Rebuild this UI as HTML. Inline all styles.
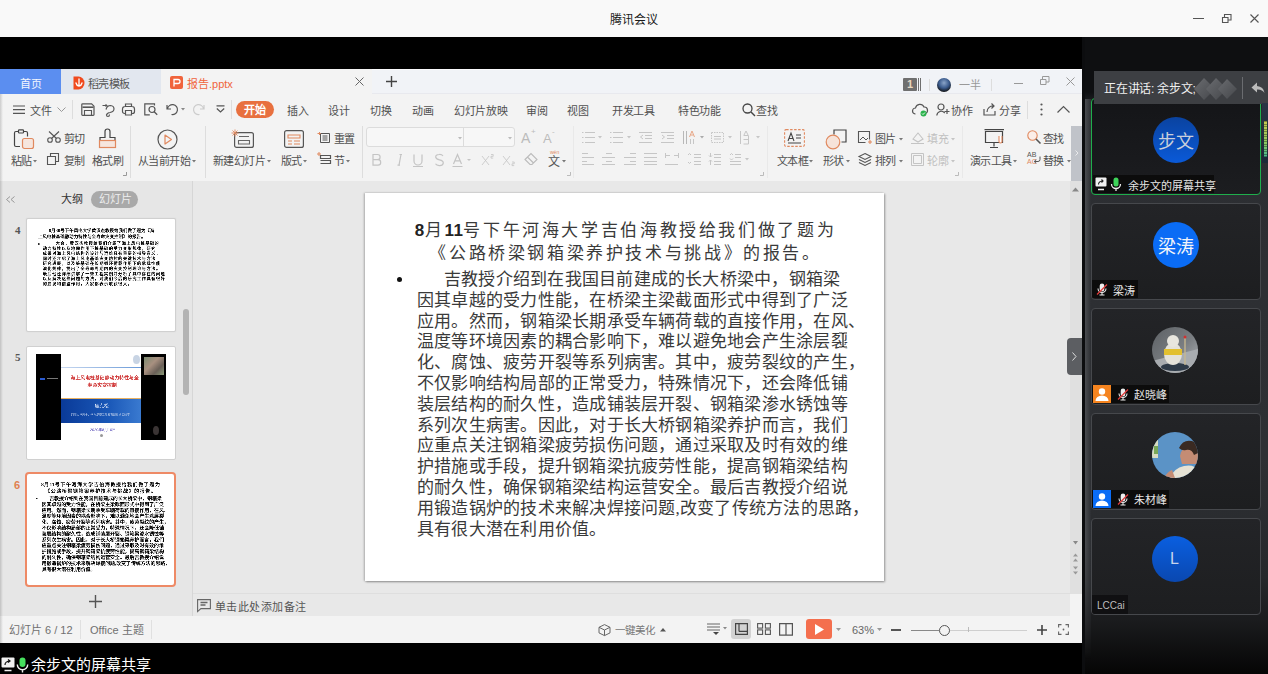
<!DOCTYPE html>
<html lang="zh-CN"><head><meta charset="utf-8">
<style>
*{margin:0;padding:0;box-sizing:border-box}
html,body{width:1268px;height:674px;overflow:hidden;background:#000;font-family:"Liberation Sans",sans-serif}
.a{position:absolute}
.t{position:absolute;white-space:nowrap;line-height:1}
svg{position:absolute;overflow:visible}
#title{left:0;top:0;width:1268px;height:37px;background:#f9f9f9}
#wps{left:0;top:69px;width:1082px;height:574px;background:#f3f3f3;overflow:hidden}
#tabs{left:0;top:0;width:1082px;height:25px;background:#f1f3f7}
#rp{left:1082px;top:37px;width:186px;height:637px;background:#0d0e10}
.m{font-size:11px;color:#505050;margin-top:2px;letter-spacing:-0.3px}
.r{font-size:11px;color:#505050;margin-top:2px;letter-spacing:-0.6px}
.g{color:#b8b8b8}
.st{position:absolute;left:0;width:519px;text-align:center;white-space:nowrap;font-family:"Liberation Serif",serif;font-size:17px;line-height:20px;letter-spacing:2.62px;color:#3a3a3a;text-indent:2px}
.dg{font-family:"Liberation Sans",sans-serif;letter-spacing:0.5px;font-weight:bold;color:#222}
.sl{position:absolute;white-space:nowrap;font-family:"Liberation Serif",serif;font-size:17px;line-height:20px;color:#3a3a3a;letter-spacing:0.23px}
.th{color:#000;font-weight:bold}
</style></head><body>
<!-- Title bar -->
<div id="title" class="a">
  <div class="t" style="left:610px;top:14px;font-size:12px;color:#1a1a1a">腾讯会议</div>
  <div class="a" style="left:1193px;top:18px;width:11px;height:1px;background:#555"></div>
  <svg style="left:1222px;top:14px" width="10" height="9"><path d="M0.5 3.5h5.5v5h-5.5z M2.5 3.5v-3h6.5v5.5h-3" fill="none" stroke="#555" stroke-width="1.1"/></svg>
  <svg style="left:1250px;top:14px" width="9" height="9"><path d="M0.5 0.5L8.5 8.5M8.5 0.5L0.5 8.5" stroke="#555" stroke-width="1.1"/></svg>
</div>

<!-- WPS window -->
<div id="wps" class="a">
  <div id="tabs" class="a">
    <div class="a" style="left:0;top:0;width:61px;height:25px;background:#5b8ef0"></div>
    <div class="t" style="left:20px;top:10px;font-size:11px;color:#f4f7ff;letter-spacing:-0.4px">首页</div>
    <div class="a" style="left:61px;top:0;width:100px;height:25px;background:#e2e7ef"></div>
    <svg style="left:73px;top:7px" width="12" height="14"><path d="M0.5 0.5h5a6 6.5 0 0 1 0 13h-5z" fill="#f04a1e"/><path d="M6 3v7M6 10q-2.5-0.5-3-3M6 10q2.5-0.5 3-3" stroke="#fff" stroke-width="1.3" fill="none" stroke-linecap="round"/></svg>
    <div class="t" style="left:88px;top:10px;font-size:11px;color:#555;letter-spacing:-0.6px">稻壳模板</div>
    <div class="a" style="left:372px;top:0;width:710px;height:1px;background:#fafbfd"></div><div class="a" style="left:372px;top:24px;width:710px;height:1px;background:#e8e9ee"></div><div class="a" style="left:161px;top:0;width:211px;height:25px;background:#f3f3f3"></div>
    <div class="a" style="left:170px;top:7px;width:13px;height:13px;background:#f0643c;border-radius:2px"></div>
    <svg style="left:170px;top:7px" width="13" height="13"><path d="M4 10.5V3.5h4a2 2 0 0 1 0 4H4.5" stroke="#fff" stroke-width="1.3" fill="none"/></svg>
    <div class="t" style="left:187px;top:10px;font-size:11px;color:#f0643c">报告.pptx</div>
    <svg style="left:355px;top:8px" width="9" height="9"><path d="M0.5 0.5L8.5 8.5M8.5 0.5L0.5 8.5" stroke="#666" stroke-width="1"/></svg>
    <svg style="left:386px;top:7px" width="11" height="11"><path d="M5.5 0v11M0 5.5h11" stroke="#444" stroke-width="1.4"/></svg>
    <div class="a" style="left:903px;top:9px;width:14px;height:13px;background:#6f6f6f;border-radius:1px"></div>
    <div class="t" style="left:907px;top:10px;font-size:11px;color:#e8d8c0;font-weight:bold">1</div>
    <div class="a" style="left:918px;top:9px;width:1px;height:13px;background:#6f6f6f"></div>
    <div class="a" style="left:920px;top:9px;width:1px;height:13px;background:#6f6f6f"></div>
    <div class="a" style="left:929px;top:10px;width:1px;height:12px;background:#ddd"></div>
    <div class="a" style="left:937px;top:9px;width:14px;height:14px;border-radius:50%;background:radial-gradient(circle at 50% 35%,#8aa4c8 0,#3a5a8c 45%,#111 80%)"></div>
    <div class="t" style="left:959px;top:11px;font-size:11px;color:#999">一半</div>
    <div class="a" style="left:991px;top:10px;width:1px;height:12px;background:#ddd"></div>
    <div class="a" style="left:1014px;top:14px;width:9px;height:1px;background:#999"></div>
    <svg style="left:1040px;top:7px" width="10" height="9"><path d="M0.5 3.5h5.5v5h-5.5z M2.5 3.5v-3h6.5v5.5h-3" fill="none" stroke="#999" stroke-width="1"/></svg>
    <svg style="left:1066px;top:8px" width="9" height="9"><path d="M0.5 0.5L8.5 8.5M8.5 0.5L0.5 8.5" stroke="#999" stroke-width="1"/></svg>
  </div>
  <!-- menu row -->
  <div id="menu" class="a" style="left:0;top:25px;width:1082px;height:31px">
    <svg style="left:13px;top:11px" width="12" height="10"><path d="M0 1h12M0 4.7h12M0 8.4h12" stroke="#555" stroke-width="1.2"/></svg>
    <div class="t m" style="left:30px;top:10px">文件</div>
    <svg style="left:57px;top:13px" width="9" height="5"><path d="M0.5 0.5l4 4l4-4" stroke="#999" fill="none" stroke-width="1"/></svg>
    <div class="a" style="left:72px;top:6px;width:1px;height:19px;background:#ddd"></div>
    <svg style="left:81px;top:9px" width="14" height="13"><path d="M1.6 0.8h9l2.4 2.4v8.4a0.8 0.8 0 0 1-0.8 0.8h-10.6a0.8 0.8 0 0 1-0.8-0.8v-10a0.8 0.8 0 0 1 0.8-0.8z" stroke="#555" fill="none" stroke-width="1.2"/><path d="M1.5 4.2h11" stroke="#555" stroke-width="1.6"/><path d="M3.5 12v-4.5h7v4.5" stroke="#555" fill="none" stroke-width="1.1"/></svg>
    <svg style="left:102px;top:9px" width="13" height="14"><path d="M0.5 2.5h4.5M3.5 1l1.5 1.5l-1.5 1.5" stroke="#555" fill="none" stroke-width="1"/><path d="M4 6.5q1-4 4.5-4q3.5 0.3 3.5 3.5q-0.3 3-4 3.5q-3 0.3-3.5 2.5q0 1.5 1.5 1.5q1.5 0 1.5-2" stroke="#555" fill="none" stroke-width="1.2"/></svg>
    <svg style="left:122px;top:9px" width="13" height="13"><path d="M3.5 3.5v-2.5h6v2.5 M3 10.5h-0.5a2 2 0 0 1-2-2v-2.5a2.5 2.5 0 0 1 2.5-2.5h7a2.5 2.5 0 0 1 2.5 2.5v2.5a2 2 0 0 1-2 2h-0.5 M3.5 7.5h6v4.5h-6z" stroke="#555" fill="none" stroke-width="1.2"/></svg>
    <svg style="left:144px;top:9px" width="14" height="13"><path d="M10.5 2.5V0.8H0.8v11h5" stroke="#555" fill="none" stroke-width="1.2"/><circle cx="8" cy="6.5" r="3" stroke="#555" fill="none" stroke-width="1.2"/><path d="M10.2 8.7l3 3" stroke="#555" stroke-width="1.3"/></svg>
    <svg style="left:166px;top:10px" width="12" height="11"><path d="M1 1v4h4 M1.5 5a5 5 0 1 1 4 5.5" stroke="#555" fill="none" stroke-width="1.2"/></svg>
    <svg style="left:181px;top:14px" width="4" height="3"><path d="M0 0h4l-2 2.5z" fill="#888"/></svg>
    <svg style="left:194px;top:10px" width="11" height="11"><path d="M10 1v4h-4 M9.5 5a5 5 0 1 0-4 5.5" stroke="#ccc" fill="none" stroke-width="1.2"/></svg>
    <svg style="left:216px;top:11px" width="9" height="8"><path d="M0.5 0.8h8 M0.8 3.5l3.7 3.5l3.7-3.5" stroke="#555" fill="none" stroke-width="1.2"/></svg>
    <div class="a" style="left:231px;top:6px;width:1px;height:19px;background:#ddd"></div>
    <div class="a" style="left:236px;top:7px;width:38px;height:17px;background:#e8703f;border-radius:9px"></div>
    <div class="t" style="left:244px;top:11px;font-size:11px;color:#fff;font-weight:bold">开始</div>
    <div class="t m" style="left:287px;top:10px">插入</div>
    <div class="t m" style="left:328px;top:10px">设计</div>
    <div class="t m" style="left:370px;top:10px">切换</div>
    <div class="t m" style="left:412px;top:10px">动画</div>
    <div class="t m" style="left:454px;top:10px">幻灯片放映</div>
    <div class="t m" style="left:526px;top:10px">审阅</div>
    <div class="t m" style="left:567px;top:10px">视图</div>
    <div class="t m" style="left:612px;top:10px">开发工具</div>
    <div class="t m" style="left:678px;top:10px">特色功能</div>
    <svg style="left:742px;top:9px" width="14" height="14"><circle cx="5.5" cy="5.5" r="4.5" stroke="#444" fill="none" stroke-width="1.3"/><path d="M9 9l4 4" stroke="#444" stroke-width="1.4"/></svg>
    <div class="t m" style="left:756px;top:10px">查找</div>
    <svg style="left:912px;top:9px" width="16" height="14"><path d="M3.5 11a3 3 0 0 1 0-6a4.5 4.5 0 0 1 8.5-1a3.3 3.3 0 0 1 1 6.5" stroke="#555" fill="none" stroke-width="1.2"/><circle cx="11.5" cy="10.5" r="3" fill="#2bb24c"/><path d="M10 10.5l1 1l2-2" stroke="#fff" stroke-width="0.9" fill="none"/></svg>
    <svg style="left:936px;top:9px" width="14" height="14"><circle cx="5" cy="4" r="3" stroke="#555" fill="none" stroke-width="1.2"/><path d="M0.8 12.5a4.5 4.5 0 0 1 8-2.5 M11 6v5M8.5 8.5h5" stroke="#555" fill="none" stroke-width="1.2"/></svg>
    <div class="t m" style="left:951px;top:10px">协作</div>
    <svg style="left:983px;top:9px" width="13" height="13"><path d="M1 6v6h11v-4 M4 9a6 6 0 0 1 7-6 M8.5 0.5l2.5 2.5l-2.5 2.5" stroke="#555" fill="none" stroke-width="1.2"/></svg>
    <div class="t m" style="left:999px;top:10px">分享</div>
    <div class="a" style="left:1027px;top:7px;width:1px;height:18px;background:#ddd"></div>
    <svg style="left:1040px;top:9px" width="3" height="13"><circle cx="1.5" cy="1.5" r="1.1" fill="#555"/><circle cx="1.5" cy="6.5" r="1.1" fill="#555"/><circle cx="1.5" cy="11.5" r="1.1" fill="#555"/></svg>
    <svg style="left:1057px;top:12px" width="13" height="7"><path d="M0.5 6.5l6-6l6 6" stroke="#555" fill="none" stroke-width="1.2"/></svg>
  </div>
  <!-- ribbon -->
  <div id="ribbon" class="a" style="left:0;top:56px;width:1082px;height:56px">
    <!-- paste -->
    <svg style="left:14px;top:4px" width="21" height="21"><path d="M4.5 2.5h-2.5a1.5 1.5 0 0 0-1.5 1.5v12a1.5 1.5 0 0 0 1.5 1.5h4 M9.5 2.5h2.5a1.5 1.5 0 0 1 1.5 1.5v3.5" stroke="#444" fill="none" stroke-width="1.2"/><rect x="4.5" y="0.8" width="5" height="3.2" rx="0.8" stroke="#444" fill="none" stroke-width="1.2"/><rect x="8.5" y="9.5" width="11" height="10" rx="2" fill="#f6e6de" stroke="#e0895f" stroke-width="1.2"/></svg>
    <div class="t r" style="left:11px;top:29px">粘贴</div>
    <svg style="left:33px;top:35px" width="4" height="3"><path d="M0 0h4l-2 2.5z" fill="#777"/></svg>
    <svg style="left:47px;top:6px" width="14" height="12"><circle cx="3" cy="9" r="2.3" stroke="#555" fill="none" stroke-width="1.1"/><circle cx="11" cy="9" r="2.3" stroke="#555" fill="none" stroke-width="1.1"/><path d="M4.5 7.5L12 0.5M9.5 7.5L2 0.5" stroke="#555" stroke-width="1.1"/></svg>
    <div class="t r" style="left:64px;top:7px">剪切</div>
    <svg style="left:47px;top:28px" width="13" height="12"><path d="M3.5 3.5v-3h8v8h-3 M0.5 3.5h8v8h-8z" stroke="#555" fill="none" stroke-width="1.1"/></svg>
    <div class="t r" style="left:64px;top:29px">复制</div>
    <svg style="left:98px;top:4px" width="19" height="20"><path d="M7 8.5v-6a2.5 2.5 0 0 1 5 0v6h5v3h-15v-3z" stroke="#444" fill="none" stroke-width="1.2"/><rect x="1.5" y="11.5" width="16" height="7" fill="#f6e6de" stroke="#e0895f" stroke-width="1.2"/></svg>
    <div class="t r" style="left:92px;top:29px">格式刷</div>
    <svg style="left:123px;top:47px" width="4" height="4"><path d="M3.5 0v3.5h-3.5" stroke="#999" fill="none" stroke-width="1"/></svg>
    <div class="a" style="left:130px;top:1px;width:1px;height:52px;background:#ddd"></div>
    <svg style="left:157px;top:4px" width="21" height="21"><circle cx="10.5" cy="10.5" r="9.5" stroke="#555" fill="none" stroke-width="1.2"/><path d="M8 6l6.5 4.5l-6.5 4.5z" stroke="#e0895f" fill="none" stroke-width="1.2" stroke-linejoin="round"/></svg>
    <div class="t r" style="left:138px;top:29px">从当前开始</div>
    <svg style="left:192px;top:35px" width="4" height="3"><path d="M0 0h4l-2 2.5z" fill="#777"/></svg>
    <div class="a" style="left:205px;top:1px;width:1px;height:52px;background:#ddd"></div>
    <svg style="left:231px;top:4px" width="23" height="19"><rect x="3.6" y="3.6" width="18.8" height="14.8" rx="2" stroke="#555" fill="none" stroke-width="1.2"/><path d="M8 7.5h10M7.5 11.5h11v3.5h-11z" stroke="#666" fill="none" stroke-width="1.1"/><path d="M4 0.5v7M0.5 4h7M1.5 1.5l5 5M6.5 1.5l-5 5" stroke="#e0895f" stroke-width="0.9"/></svg>
    <div class="t r" style="left:213px;top:29px">新建幻灯片</div>
    <svg style="left:267px;top:35px" width="4" height="3"><path d="M0 0h4l-2 2.5z" fill="#777"/></svg>
    <svg style="left:284px;top:5px" width="20" height="18"><rect x="0.6" y="0.6" width="18.8" height="16.8" rx="2" stroke="#555" fill="none" stroke-width="1.2"/><path d="M4 5h12v3h-12z M4 11h4M10 11h6M4 14h4M10 14h6" stroke="#e0895f" fill="none" stroke-width="1.1"/></svg>
    <div class="t r" style="left:281px;top:29px">版式</div>
    <svg style="left:303px;top:35px" width="4" height="3"><path d="M0 0h4l-2 2.5z" fill="#777"/></svg>
    <svg style="left:317px;top:5px" width="14" height="13"><path d="M3.5 3.5h9v9h-9z M5.5 6h5M5.5 8h5M5.5 10h5" stroke="#555" fill="none" stroke-width="1"/><path d="M0.5 3.5h2.5M2 2l1.5 1.5L2 5" stroke="#e0895f" fill="none" stroke-width="1"/></svg>
    <div class="t r" style="left:334px;top:7px">重置</div>
    <svg style="left:317px;top:27px" width="14" height="12"><path d="M3.5 3.5h10v3h-10z M3.5 8.5h10v3h-10" stroke="#555" fill="none" stroke-width="1.2"/><path d="M2 0v4M0 2h4" stroke="#e0895f" stroke-width="1"/></svg>
    <div class="t r" style="left:334px;top:29px">节</div>
    <svg style="left:346px;top:35px" width="4" height="3"><path d="M0 0h4l-2 2.5z" fill="#777"/></svg>
    <div class="a" style="left:362px;top:1px;width:1px;height:52px;background:#ddd"></div>
    <!-- font boxes -->
    <div class="a" style="left:366px;top:2px;width:149px;height:20px;background:#f7f7f7;border:1px solid #dcdcdc;border-radius:3px"></div>
    <div class="a" style="left:463px;top:3px;width:1px;height:18px;background:#dcdcdc"></div>
    <svg style="left:458px;top:12px" width="4" height="3"><path d="M0 0h4l-2 2.5z" fill="#bbb"/></svg>
    <svg style="left:508px;top:12px" width="4" height="3"><path d="M0 0h4l-2 2.5z" fill="#bbb"/></svg>
    <div class="t" style="left:521px;top:6px;font-size:14px;color:#bbb">A</div>
    <div class="t" style="left:531px;top:3px;font-size:8px;color:#bbb">+</div>
    <div class="t" style="left:543px;top:7px;font-size:13px;color:#bbb">A</div>
    <div class="t" style="left:552px;top:3px;font-size:8px;color:#bbb">-</div>
    <svg style="left:370px;top:27px" width="150" height="16" fill="none" stroke="#c4c4c4" stroke-width="1.2">
      <path d="M3 2.5h4.5a2.6 2.6 0 0 1 0 5.2h-4.5z M3 7.7h5a2.7 2.7 0 0 1 0 5.4h-5z"/>
      <path d="M29.5 2.5h2.5M27.5 13.1h2.5M31 2.5l-2 10.6"/>
      <path d="M44 2.5v6.5a4 4 0 0 0 8 0v-6.5 M43 14.5h10"/>
      <path d="M73 4a3.8 3.2 0 0 0-3.8-1.5q-3.7 0.3-3.5 2.7q0.3 2 3.8 2.7q4 0.8 3.8 3.2q-0.5 2.7-4 2.5q-2.8-0.2-3.8-1.8"/>
      <path d="M83.5 12l4-9.5l4 9.5 M85 8.8h5 M82.5 14.5h10"/>
      <path d="M97 7h4l-2 2z" fill="#c4c4c4" stroke="none"/>
      <path d="M112 4l7 9M119 4l-7 9 M121 2.5h2.2v1.8h-2.2v1.8h2.2" stroke-width="0.8"/>
      <path d="M133 4l7 9M140 4l-7 9 M142 10h2.2v1.8h-2.2v1.8h2.2" stroke-width="0.8"/>
    </svg>
    <svg style="left:524px;top:27px" width="14" height="13"><path d="M1 7.5l6-6l6 6l-5 5h-2z M3.5 5l6 6" stroke="#bbb" fill="none" stroke-width="1.1"/></svg>
    <div class="t" style="left:548px;top:31px;font-size:12px;color:#555">文</div>
    <div class="t" style="left:550px;top:25px;font-size:5px;color:#e0895f">wén</div>
    <svg style="left:562px;top:35px" width="4" height="3"><path d="M0 0h4l-2 2.5z" fill="#777"/></svg>
    <svg style="left:567px;top:47px" width="4" height="4"><path d="M3.5 0v3.5h-3.5" stroke="#bbb" fill="none" stroke-width="1"/></svg>
    <div class="a" style="left:573px;top:1px;width:1px;height:52px;background:#e9e9e9"></div>
    <!-- paragraph icons (disabled) -->
    <svg style="left:578px;top:3px" width="190" height="42" fill="none" stroke="#c6c6c6" stroke-width="1"><path d="M4 4.5h1.5M7 4.5h10"/><path d="M4 9.5h1.5M7 9.5h10"/><path d="M4 14.5h1.5M7 14.5h10"/><path d="M20 8h4l-2 2.5z" fill="#c6c6c6" stroke="none"/><path d="M32 4.5h1.5M35 4.5h10"/><path d="M32 9.5h1.5M35 9.5h10"/><path d="M32 14.5h1.5M35 14.5h10"/><path d="M49 8h4l-2 2.5z" fill="#c6c6c6" stroke="none"/><path d="M61 4.5h13M67 7.5h7M67 10.5h7M61 14.5h13M65 7l-2.5 2l2.5 2"/><path d="M83 4.5h13M89 7.5h7M89 10.5h7M83 14.5h13M84 7l2.5 2l-2.5 2"/><path d="M105.5 3v13M108.5 3v13" stroke="#b8b8b8"/><path d="M111.5 9l2.5-6l2.5 6M112.5 7h3" stroke="#e8a888"/><path d="M112.5 11v5M115.5 11v5"/><path d="M122 8h4l-2 2.5z" fill="#aaa" stroke="none"/><path d="M133.5 4.5h12v10h-12z" stroke-dasharray="1.5 1"/><path d="M136 8.5h7M136 11h7"/><path d="M150 8h4l-2 2.5z" fill="#c6c6c6" stroke="none"/><path d="M162.5 3v13"/><path d="M166 7l2-4l2 4M165.5 7.5h5v8.5h-5M165.5 11.5h5"/><path d="M178 8h4l-2 2.5z" fill="#c6c6c6" stroke="none"/><path d="M4 25.5h6M4 29.5h12M4 33.5h5M4 36.5h12"/><path d="M28 25.5h6M24 29.5h13M28 33.5h6M24 36.5h13"/><path d="M52 25.5h6M46 29.5h12M52 33.5h6M46 36.5h12"/><path d="M66 25.5h13M66 29.5h13M66 33.5h13M66 36.5h13"/><path d="M87.5 25v5M100.5 25v5M88 27.5h4M96 27.5h4M87 36.5h13"/><path d="M110 27l1.5-1.5l1.5 1.5M110 34l1.5 1.5l1.5-1.5M116 26.5h7M116 29.5h7M116 33.5h7M116 36.5h7"/><path d="M132.5 25v4M131 27.5l1.5 1.5l1.5-1.5M132.5 32v5M131 33.5l1.5-1.5l1.5 1.5M136 26.5h7M136 29.5h7M136 33.5h7M136 36.5h7"/><path d="M152 27l1.5-1.5l1.5 1.5M152 30.5l1.5 1.5l1.5-1.5M157 26.5h6M157 29.5h6M152 33.5h11M152 36.5h11"/><path d="M167 30h4l-2 2.5z" fill="#c6c6c6" stroke="none"/></svg>
    <svg style="left:760px;top:47px" width="4" height="4"><path d="M3.5 0v3.5h-3.5" stroke="#bbb" fill="none" stroke-width="1"/></svg>
    <div class="a" style="left:767px;top:1px;width:1px;height:52px;background:#e9e9e9"></div>
    <!-- textbox -->
    <svg style="left:784px;top:4px" width="21" height="18"><rect x="0.6" y="0.6" width="19.8" height="16.8" rx="1.5" stroke="#e0895f" fill="none" stroke-width="1.1" stroke-dasharray="2.5 1.5"/><path d="M4 12l3-8l3 8M5 9.5h4M12 6h5M12 9h5M4 14h13" stroke="#444" fill="none" stroke-width="1.1"/></svg>
    <div class="t r" style="left:777px;top:29px">文本框</div>
    <svg style="left:809px;top:35px" width="4" height="3"><path d="M0 0h4l-2 2.5z" fill="#777"/></svg>
    <svg style="left:825px;top:4px" width="22" height="20"><path d="M9 5.5v-4.5h12v12h-4.5" stroke="#444" fill="none" stroke-width="1.2"/><circle cx="8" cy="13" r="6.8" fill="#f6e3d9" stroke="#e0895f" stroke-width="1.2"/></svg>
    <div class="t r" style="left:823px;top:29px">形状</div>
    <svg style="left:846px;top:35px" width="4" height="3"><path d="M0 0h4l-2 2.5z" fill="#777"/></svg>
    <svg style="left:858px;top:6px" width="15" height="13"><path d="M11.5 8.5v-8h-11v11h7" stroke="#555" fill="none" stroke-width="1.1"/><path d="M2 9l3-3l3 3l2-2" stroke="#555" fill="none" stroke-width="1"/><path d="M12 9v4M10 11h4" stroke="#e0895f" stroke-width="1.1"/></svg>
    <div class="t r" style="left:875px;top:7px">图片</div>
    <svg style="left:899px;top:13px" width="4" height="3"><path d="M0 0h4l-2 2.5z" fill="#777"/></svg>
    <svg style="left:858px;top:28px" width="14" height="13"><path d="M7 0.5l6 3l-6 3l-6-3z M1 6.5l6 3l6-3 M1 9.5l6 3l6-3" stroke="#555" fill="none" stroke-width="1.1"/></svg>
    <div class="t r" style="left:875px;top:29px">排列</div>
    <svg style="left:899px;top:35px" width="4" height="3"><path d="M0 0h4l-2 2.5z" fill="#777"/></svg>
    <svg style="left:911px;top:6px" width="13" height="13"><path d="M2 8l5-6l5 6l-5 3z M0 12.5h13" stroke="#c4c4c4" fill="none" stroke-width="1.1"/></svg>
    <div class="t" style="left:927px;top:7px;font-size:11px;color:#c0c0c0;margin-top:2px">填充</div>
    <svg style="left:951px;top:13px" width="4" height="3"><path d="M0 0h4l-2 2.5z" fill="#c4c4c4"/></svg>
    <svg style="left:911px;top:28px" width="13" height="13"><path d="M0.5 0.5h12v12h-12z M2.5 2.5h8v8h-8z" stroke="#c4c4c4" fill="none" stroke-width="1"/></svg>
    <div class="t" style="left:927px;top:29px;font-size:11px;color:#c0c0c0;margin-top:2px">轮廓</div>
    <svg style="left:951px;top:35px" width="4" height="3"><path d="M0 0h4l-2 2.5z" fill="#c4c4c4"/></svg>
    <svg style="left:955px;top:47px" width="4" height="4"><path d="M3.5 0v3.5h-3.5" stroke="#bbb" fill="none" stroke-width="1"/></svg>
    <div class="a" style="left:962px;top:1px;width:1px;height:52px;background:#e9e9e9"></div>
    <svg style="left:984px;top:4px" width="21" height="20"><path d="M0.5 0.6h19.5 M1.5 2.5h17v11h-17z M10 13.5v4 M6 18.5h8" stroke="#444" fill="none" stroke-width="1.2"/><path d="M15 7v5.5a1.5 1.5 0 0 0 3 0v-5.5" stroke="#e0895f" fill="#fff" stroke-width="1.1"/></svg>
    <div class="t r" style="left:970px;top:29px">演示工具</div>
    <svg style="left:1013px;top:35px" width="4" height="3"><path d="M0 0h4l-2 2.5z" fill="#777"/></svg>
    <svg style="left:1027px;top:5px" width="14" height="14"><circle cx="5.5" cy="5.5" r="4.7" stroke="#e0895f" fill="#fbeee8" stroke-width="1.1"/><path d="M9 9l4.5 4.5" stroke="#555" stroke-width="1.6"/></svg>
    <div class="t r" style="left:1043px;top:7px">查找</div>
    <div class="t" style="left:1027px;top:26px;font-size:7px;color:#555;line-height:7px">AB<br><span style="color:#e0895f">AC</span></div>
    <svg style="left:1034px;top:31px" width="7" height="8"><path d="M6 0.5v3a2 2 0 0 1-2 2h-3.5M2 3.5l-1.5 2l1.5 2" stroke="#555" fill="none" stroke-width="1"/></svg>
    <div class="t r" style="left:1043px;top:29px">替换</div>
    <svg style="left:1067px;top:35px" width="4" height="3"><path d="M0 0h4l-2 2.5z" fill="#777"/></svg>
    <div class="a" style="left:1071px;top:1px;width:11px;height:55px;background:#c0c3c9"></div>
    <svg style="left:1075px;top:25px" width="4" height="6"><path d="M0.5 0.5l2.5 2.5l-2.5 2.5" stroke="#eee" fill="none" stroke-width="0.9"/></svg>
  </div>
  <!-- left panel -->
  <div id="lp" class="a" style="left:0;top:112px;width:192px;height:435px;background:#e6e6e6">
    <svg style="left:6px;top:15px" width="9" height="7"><path d="M4 0.5l-3.5 3l3.5 3M8.5 0.5l-3.5 3l3.5 3" stroke="#999" fill="none" stroke-width="1"/></svg>
    <div class="t" style="left:61px;top:13px;font-size:11px;color:#333">大纲</div>
    <div class="a" style="left:91px;top:10px;width:47px;height:17px;background:#a9a9a9;border-radius:9px"></div>
    <div class="t" style="left:99px;top:13px;font-size:11px;color:#eee">幻灯片</div>
    <div class="t" style="left:15px;top:44px;font-size:11px;color:#555;font-family:'Liberation Serif',serif;font-weight:bold">4</div>
    <div class="a" style="left:26px;top:37px;width:150px;height:114px;background:#fff;border:1px solid #d0d0d0;border-radius:2px;box-shadow:0 0 1px #ccc;overflow:hidden"><div class="a" style="left:0;top:0;width:519px;height:388px;transform:scale(0.2875);transform-origin:0 0;will-change:transform"><div class="sl" style="left:76px;top:30px;font-size:15px;letter-spacing:0.6px;color:#000;font-weight:bold">8月30号下午风电大学黄汉杰教授给我们做了题为《海</div><div class="sl" style="left:38px;top:51px;font-size:15px;letter-spacing:0.6px;color:#000;font-weight:bold">上风电桩基础静动力特性与全寿命灾变控制》的报告。</div><div class="a" style="left:38px;top:84px;width:6px;height:6px;border-radius:50%;background:#222"></div><div class="sl" style="left:100px;top:75.0px;font-size:14px;letter-spacing:2.4px;color:#000;font-weight:bold">大会，黄汉杰教授给我们介绍了海上风电桩基础的</div><div class="sl" style="left:55px;top:92.6px;font-size:14px;letter-spacing:2.4px;color:#000;font-weight:bold">动力特性以及地震作用下桩基础的受力变形规律，研究</div><div class="sl" style="left:55px;top:110.2px;font-size:14px;letter-spacing:2.4px;color:#000;font-weight:bold">成果对海上风电结构的设计与运维具有重要的指导意义，</div><div class="sl" style="left:55px;top:127.8px;font-size:14px;letter-spacing:2.4px;color:#000;font-weight:bold">同时还介绍了海上风电基础灾变防控的关键技术与方法</div><div class="sl" style="left:55px;top:145.4px;font-size:14px;letter-spacing:2.4px;color:#000;font-weight:bold">研究进展，以及桩基础在长期循环荷载作用下的承载性能</div><div class="sl" style="left:55px;top:163.0px;font-size:14px;letter-spacing:2.4px;color:#000;font-weight:bold">演化规律，提出了全寿命周期内的灾变控制理论与方法。</div><div class="sl" style="left:55px;top:180.6px;font-size:14px;letter-spacing:2.4px;color:#000;font-weight:bold">最后他还详细讲解了一些工程实例并分析了其中存在的问题</div><div class="sl" style="left:55px;top:198.2px;font-size:14px;letter-spacing:2.4px;color:#000;font-weight:bold">以及解决这些问题的方法，对我们今后的研究工作具有很好</div><div class="sl" style="left:55px;top:215.8px;font-size:14px;letter-spacing:2.4px;color:#000;font-weight:bold">的启发和借鉴作用，大家都表示收获很大。</div></div></div>
    <div class="t" style="left:15px;top:171px;font-size:11px;color:#555;font-family:'Liberation Serif',serif;font-weight:bold">5</div>
    <div class="a" style="left:26px;top:165px;width:150px;height:114px;background:#fff;border:1px solid #d0d0d0;border-radius:2px;overflow:hidden">
<div class="a" style="left:9px;top:7px;width:25px;height:86px;background:#000"></div>
<div class="a" style="left:114px;top:7px;width:25px;height:86px;background:#000"></div>
<div class="a" style="left:13px;top:30.5px;width:5px;height:2px;background:#2a5ad0"></div>
<div class="a" style="left:20px;top:30.5px;width:11px;height:1.5px;background:#777"></div>
<div class="a" style="left:34px;top:20px;width:80px;height:1px;background:linear-gradient(90deg,#c8d8f0,#6a9ad8)"></div>
<div class="a" style="left:106px;top:8px;width:7px;height:9px;border-radius:50%;background:#c8d4e4"></div>
<div class="a" style="left:34px;top:0;width:240px;height:80px;transform:scale(0.25);transform-origin:0 0;will-change:transform"><div class="t" style="left:38px;top:114px;font-size:19px;font-weight:bold;color:#d03838;letter-spacing:0.5px">海上风电桩基础静动力特性与全</div><div class="t" style="left:106px;top:143px;font-size:19px;font-weight:bold;color:#d03838;letter-spacing:0.5px">寿命灾变控制</div></div>
<div class="a" style="left:34px;top:51px;width:80px;height:25px;background:linear-gradient(90deg,#0a3a98,#1a58b8 60%,#3a7ad0)"></div>
<div class="a" style="left:34px;top:51px;width:80px;height:1px;background:#e8b060"></div>
<div class="a" style="left:34px;top:0;width:320px;height:400px;transform:scale(0.25);transform-origin:0 0;will-change:transform"><div class="t" style="left:134px;top:226px;font-size:19px;color:#e0e8f8">焦克松</div><div class="t" style="left:40px;top:266px;font-size:11.5px;letter-spacing:0.2px;color:#d0dcf0">河海大学岩土力学与堤坝工程教育部重点实验室</div><div class="t" style="left:116px;top:323px;font-size:15px;color:#5a50b8">2020年8月10日</div></div>
<div class="a" style="left:73px;top:87px;width:3px;height:3px;border-radius:50%;background:#999"></div>
<div class="a" style="left:117px;top:10px;width:20px;height:18px;background:linear-gradient(135deg,#7a8a70,#a89080 40%,#6a6058 70%,#8a9a78)"></div>
<div class="a" style="left:126px;top:79px;width:6px;height:9px;border-radius:50%;background:#3a3434"></div>
</div>
    <div class="t" style="left:14px;top:299px;font-size:11px;color:#e0804f;font-family:'Liberation Sans',sans-serif;font-weight:bold">6</div>
    <div class="a" style="left:25px;top:291px;width:151px;height:115px;background:#fff;border:2px solid #ee8a66;border-radius:4px;overflow:hidden"><div class="a" style="left:0;top:0;width:519px;height:388px;transform:scale(0.2835);transform-origin:0 0;will-change:transform">
<div class="st th" style="top:28px"><span class="dg">8</span>月<span class="dg">11</span>号下午河海大学吉伯海教授给我们做了题为</div>
<div class="st th" style="top:51px">《公路桥梁钢箱梁养护技术与挑战》的报告。</div>
<div class="a" style="left:32px;top:83.5px;width:5px;height:5px;border-radius:50%;background:#111"></div>
<div class="sl th" style="left:79px;top:77.0px">吉教授介绍到在我国目前建成的长大桥梁中，钢箱梁</div>
<div class="sl th" style="left:52px;top:97.8px">因其卓越的受力性能，在桥梁主梁截面形式中得到了广泛</div>
<div class="sl th" style="left:52px;top:118.6px">应用。然而，钢箱梁长期承受车辆荷载的直接作用，在风、</div>
<div class="sl th" style="left:52px;top:139.4px">温度等环境因素的耦合影响下，难以避免地会产生涂层裂</div>
<div class="sl th" style="left:52px;top:160.2px">化、腐蚀、疲劳开裂等系列病害。其中，疲劳裂纹的产生，</div>
<div class="sl th" style="left:52px;top:181.0px">不仅影响结构局部的正常受力，特殊情况下，还会降低铺</div>
<div class="sl th" style="left:52px;top:201.8px">装层结构的耐久性，造成铺装层开裂、钢箱梁渗水锈蚀等</div>
<div class="sl th" style="left:52px;top:222.6px">系列次生病害。因此，对于长大桥钢箱梁养护而言，我们</div>
<div class="sl th" style="left:52px;top:243.4px">应重点关注钢箱梁疲劳损伤问题，通过采取及时有效的维</div>
<div class="sl th" style="left:52px;top:264.2px">护措施或手段，提升钢箱梁抗疲劳性能，提高钢箱梁结构</div>
<div class="sl th" style="left:52px;top:285.0px">的耐久性，确保钢箱梁结构运营安全。最后吉教授介绍说</div>
<div class="sl th" style="left:52px;top:305.8px">用锻造锅炉的技术来解决焊接问题,改变了传统方法的思路，</div>
<div class="sl th" style="left:52px;top:326.6px">具有很大潜在利用价值。</div>
</div></div>
    <svg style="left:89px;top:414px" width="13" height="13"><path d="M6.5 0v13M0 6.5h13" stroke="#555" stroke-width="1.4"/></svg>
    <div class="a" style="left:183px;top:128px;width:6px;height:86px;background:#b3b3b3;border-radius:3px"></div>
    <div class="a" style="left:192px;top:0;width:1px;height:435px;background:#d6d6d6"></div>
  </div>
  <!-- main area -->
  <div id="main" class="a" style="left:193px;top:112px;width:877px;height:435px;background:#e8e8e8">
    <div class="a" style="left:0;top:412px;width:877px;height:1px;background:#dedede"></div>
    <svg style="left:4px;top:487px" width="14" height="13"></svg>
  </div>
  <div class="a" style="left:1070px;top:112px;width:12px;height:413px;background:#e0e0e0"></div>
  <svg style="left:1072px;top:118px" width="7" height="5"><path d="M0 4.5l3.5-4l3.5 4z" fill="#888"/></svg>
  <svg style="left:1073px;top:472px" width="5" height="4"><path d="M0 0h5l-2.5 3.5z" fill="#888"/></svg>
  <svg style="left:1073px;top:484px" width="5" height="9"><path d="M0 3.5l2.5-3l2.5 3zM0 8.5l2.5-3l2.5 3z" fill="#999"/></svg>
  <svg style="left:1073px;top:497px" width="5" height="9"><path d="M0 0.5h5l-2.5 3zM0 5.5h5l-2.5 3z" fill="#999"/></svg>
  <div class="a" style="left:1067px;top:269px;width:15px;height:37px;background:#5c5e62;border-radius:4px 0 0 4px"></div>
  <svg style="left:1072px;top:283px" width="5" height="9"><path d="M0.5 0.5l3.5 4l-3.5 4" stroke="#ddd" fill="none" stroke-width="1"/></svg>
  <!-- notes -->
  <svg style="left:197px;top:530px" width="14" height="13"><path d="M0.6 0.6h12.8v9h-9.5l-3.3 3z" stroke="#666" fill="none" stroke-width="1.1"/><path d="M3.5 3.5h7M3.5 6h5" stroke="#666" stroke-width="1.3"/></svg>
  <div class="t" style="left:215px;top:533px;font-size:11px;letter-spacing:0.45px;color:#555">单击此处添加备注</div>
  <!-- slide -->
  <div id="slide" class="a" style="left:365px;top:124px;width:519px;height:388px;background:#fff;box-shadow:1px 1px 2px rgba(0,0,0,.35),-1px 0 2px rgba(0,0,0,.25)">
<div class="st" style="top:28px"><span class="dg">8</span>月<span class="dg">11</span>号下午河海大学吉伯海教授给我们做了题为</div>
<div class="st" style="top:51px">《公路桥梁钢箱梁养护技术与挑战》的报告。</div>
<div class="a" style="left:32px;top:83.5px;width:5px;height:5px;border-radius:50%;background:#111"></div>
<div class="sl" style="left:79px;top:77.0px">吉教授介绍到在我国目前建成的长大桥梁中，钢箱梁</div>
<div class="sl" style="left:52px;top:97.8px">因其卓越的受力性能，在桥梁主梁截面形式中得到了广泛</div>
<div class="sl" style="left:52px;top:118.6px">应用。然而，钢箱梁长期承受车辆荷载的直接作用，在风、</div>
<div class="sl" style="left:52px;top:139.4px">温度等环境因素的耦合影响下，难以避免地会产生涂层裂</div>
<svg style="left:473px;top:139px" width="10" height="17"><path d="M1 1h3l1 1l1-1h3M5 2v12M1 15h3l1-1l1 1h3" stroke="#fff" stroke-width="3" fill="none"/><path d="M1 1h3l1 1l1-1h3M5 2v12M1 15h3l1-1l1 1h3" stroke="#222" stroke-width="1.2" fill="none"/></svg>
<div class="sl" style="left:52px;top:160.2px">化、腐蚀、疲劳开裂等系列病害。其中，疲劳裂纹的产生，</div>
<div class="sl" style="left:52px;top:181.0px">不仅影响结构局部的正常受力，特殊情况下，还会降低铺</div>
<div class="sl" style="left:52px;top:201.8px">装层结构的耐久性，造成铺装层开裂、钢箱梁渗水锈蚀等</div>
<div class="sl" style="left:52px;top:222.6px">系列次生病害。因此，对于长大桥钢箱梁养护而言，我们</div>
<div class="sl" style="left:52px;top:243.4px">应重点关注钢箱梁疲劳损伤问题，通过采取及时有效的维</div>
<div class="sl" style="left:52px;top:264.2px">护措施或手段，提升钢箱梁抗疲劳性能，提高钢箱梁结构</div>
<div class="sl" style="left:52px;top:285.0px">的耐久性，确保钢箱梁结构运营安全。最后吉教授介绍说</div>
<div class="sl" style="left:52px;top:305.8px">用锻造锅炉的技术来解决焊接问题,改变了传统方法的思路，</div>
<div class="sl" style="left:52px;top:326.6px">具有很大潜在利用价值。</div>
</div>
  <!-- status bar -->
  <div id="status" class="a" style="left:0;top:547px;width:1082px;height:27px;background:#f3f3f3">
    <div class="t" style="left:9px;top:9px;font-size:11px;color:#707070">幻灯片 6 / 12</div>
    <div class="a" style="left:80px;top:4px;width:1px;height:19px;background:#e0e0e0"></div>
    <div class="t" style="left:90px;top:9px;font-size:11px;color:#707070">Office 主题</div>
    <div class="a" style="left:151px;top:4px;width:1px;height:19px;background:#e0e0e0"></div>
    <svg style="left:598px;top:8px" width="13" height="12"><path d="M6.5 0.6l5.5 2.7v5.6l-5.5 2.7l-5.5-2.7v-5.6z M1 3.3l5.5 2.7l5.5-2.7 M6.5 6v5.6" stroke="#666" fill="none" stroke-width="1"/></svg>
    <div class="t" style="left:615px;top:9px;font-size:10.5px;color:#777">一键美化</div>
    <svg style="left:660px;top:12px" width="6" height="4"><path d="M0 3.5l3-3.5l3 3.5z" fill="#555"/></svg>
    <svg style="left:707px;top:7px" width="20" height="12"><path d="M0 1h13M0 4h13M0 7h13" stroke="#666" stroke-width="1.2"/><path d="M6 9h6l-3 3z" fill="#444"/><path d="M16 4h4l-2 2.5z" fill="#888"/></svg>
    <div class="a" style="left:731px;top:3px;width:20px;height:20px;background:#d2d2d2;border-radius:3px"></div>
    <svg style="left:735px;top:7px" width="13" height="12"><path d="M0.6 0.6h11.8v10.8h-11.8z M4 0.6v8 M4 8.4h8.4" stroke="#444" fill="none" stroke-width="1.2"/></svg>
    <svg style="left:757px;top:7px" width="14" height="12"><rect x="0.6" y="0.6" width="5" height="4.5" stroke="#555" fill="none" stroke-width="1.1"/><rect x="8.4" y="0.6" width="5" height="4.5" stroke="#555" fill="none" stroke-width="1.1"/><rect x="0.6" y="6.9" width="5" height="4.5" stroke="#555" fill="none" stroke-width="1.1"/><rect x="8.4" y="6.9" width="5" height="4.5" stroke="#555" fill="none" stroke-width="1.1"/></svg>
    <svg style="left:779px;top:7px" width="14" height="13"><path d="M0.6 0.6h12.8v11.5h-12.8z M7 0.6v11.5" stroke="#555" fill="none" stroke-width="1.2"/></svg>
    <div class="a" style="left:806px;top:3px;width:26px;height:20px;background:#f46f4e;border-radius:3px"></div>
    <svg style="left:815px;top:8px" width="9" height="11"><path d="M0 0l9 5.5l-9 5.5z" fill="#fff"/></svg>
    <svg style="left:836px;top:12px" width="5" height="3"><path d="M0 0h5l-2.5 3z" fill="#999"/></svg>
    <div class="t" style="left:852px;top:9px;font-size:11px;color:#666">63%</div>
    <svg style="left:877px;top:12px" width="5" height="3"><path d="M0 0h5l-2.5 3z" fill="#999"/></svg>
    <div class="a" style="left:891px;top:13px;width:10px;height:2px;background:#555"></div>
    <div class="a" style="left:911px;top:13.5px;width:116px;height:1px;background:#cfcfcf"></div>
    <div class="a" style="left:911px;top:13.5px;width:28px;height:1px;background:#888"></div>
    <div class="a" style="left:968px;top:11px;width:1px;height:5px;background:#bbb"></div>
    <div class="a" style="left:938.5px;top:8.5px;width:11px;height:11px;border:1.2px solid #555;border-radius:50%;background:#f3f3f3"></div>
    <svg style="left:1037px;top:9px" width="10" height="10"><path d="M5 0v10M0 5h10" stroke="#444" stroke-width="1.6"/></svg>
    <svg style="left:1058px;top:8px" width="11" height="11"><path d="M0.6 3.5v-2.9h2.9M7.5 0.6h2.9v2.9M10.4 7.5v2.9h-2.9M3.5 10.4h-2.9v-2.9" stroke="#666" fill="none" stroke-width="1.1"/><circle cx="5.5" cy="5.5" r="0.9" fill="#666"/></svg>
  </div>
</div>

<div class="a" style="left:0;top:94px;width:3px;height:549px;background:linear-gradient(90deg,rgba(0,0,0,.16),rgba(0,0,0,0))"></div>
<!-- Bottom black text -->
<svg style="left:1px;top:657px" width="14" height="15"><rect x="0.5" y="0.5" width="13" height="10" rx="1" fill="#f0f0f0"/><path d="M4 8q0-3.5 4.5-4M7 2.5l2 1.5l-2 1.5" stroke="#111" fill="none" stroke-width="1.2"/><path d="M3.5 13.5h7" stroke="#f0f0f0" stroke-width="1.5"/></svg>
<svg style="left:16px;top:657px" width="13" height="16"><rect x="3.5" y="0.5" width="6" height="9.5" rx="3" fill="#46e05e"/><path d="M1.3 7.5a5.2 5.2 0 0 0 10.4 0M6.5 12.5v3" stroke="#eee" fill="none" stroke-width="1.4"/></svg>
<div class="t" style="left:31px;top:657px;font-size:15px;color:#fff">余步文的屏幕共享</div>

<!-- Right panel -->
<div id="rp" class="a" style="background:linear-gradient(90deg,#0c0d0f 0,#0c0d0f 3px,transparent 3px),linear-gradient(180deg,#0e0f11 0,#0e0f11 55px,#2c2e32 75px,#2e3034 420px,#26282b 540px,#1a1b1d 585px,#050505 637px)">
<div class="a" style="left:3px;top:62px;width:6px;height:560px;background:linear-gradient(90deg,#4a4c50,#2c2e32);-webkit-mask-image:linear-gradient(180deg,#000 0,#000 80%,transparent 100%)"></div>
<div class="a" style="left:9px;top:61px;width:170px;height:97px;border:1px solid #1fae4c;border-radius:4px;background:linear-gradient(#141518,#1c1d20);overflow:hidden"><div class="a" style="left:61px;top:18px;width:46px;height:46px;border-radius:50%;background:linear-gradient(#0a43a0,#0a5ad8)"></div>
<div class="t" style="left:66px;top:34px;font-size:18px;color:#c9cfdb">步文</div>
<div class="a" style="left:1px;top:76px;width:121px;height:18px;background:#0c0c0c"></div>
<svg style="left:3px;top:78px" width="12" height="14"><rect x="0.5" y="0.5" width="11" height="9" rx="1" fill="#f0f0f0"/><path d="M3.5 7.5q0-3 4-3.5M6.5 2.5l1.5 1.5l-1.5 1.5" stroke="#222" fill="none" stroke-width="1.1"/><path d="M3 12.5h6" stroke="#f0f0f0" stroke-width="1.5"/></svg>
<svg style="left:18px;top:78px" width="12" height="15"><rect x="3.5" y="0.5" width="5" height="9" rx="2.5" fill="#3ed45a"/><path d="M1.5 7a4.5 4.5 0 0 0 9 0M6 11.5v2.5" stroke="#eee" fill="none" stroke-width="1.3"/></svg>
<div class="t" style="left:36px;top:82px;font-size:11px;color:#e6e6e6">余步文的屏幕共享</div></div>
<div class="a" style="left:9px;top:166px;width:170px;height:97px;border:1px solid #46484c;border-radius:4px;background:linear-gradient(#232427,#1d1e20);overflow:hidden"><div class="a" style="left:61px;top:18px;width:46px;height:46px;border-radius:50%;background:#0a6cf5"></div>
<div class="t" style="left:66px;top:34px;font-size:18px;color:#f2f5fa">梁涛</div>
<div class="a" style="left:0;top:76px;width:46px;height:18px;background:#0c0c0c"></div>
<svg style="left:4px;top:78px" width="12" height="14"><path d="M6 1.5a2.3 2.3 0 0 1 2.3 2.3v3.4a2.3 2.3 0 0 1-4.6 0v-3.4a2.3 2.3 0 0 1 2.3-2.3z" fill="#eee"/><path d="M2 6.5a4 4 0 0 0 8 0M6 10.5v2.5M3.5 13h5" stroke="#eee" fill="none" stroke-width="1.1"/><path d="M1 12.5L11 2.5" stroke="#e23b3b" stroke-width="1.3"/></svg>
<div class="t" style="left:21px;top:82px;font-size:11px;color:#e6e6e6">梁涛</div></div>
<div class="a" style="left:9px;top:271px;width:170px;height:97px;border:1px solid #46484c;border-radius:4px;background:linear-gradient(#232427,#1d1e20);overflow:hidden"><svg style="left:60px;top:18px" width="46" height="46"><defs><clipPath id="c3"><circle cx="23" cy="23" r="23"/></clipPath><linearGradient id="g3" x1="0" y1="0" x2="1" y2="1"><stop offset="0" stop-color="#5c6064"/><stop offset=".55" stop-color="#7a7e82"/><stop offset="1" stop-color="#b4b8bc"/></linearGradient></defs><g clip-path="url(#c3)"><rect width="46" height="46" fill="url(#g3)"/><path d="M0 34l46-12v24h-46z" fill="#a8acb0"/><ellipse cx="23" cy="40" rx="14" ry="4" fill="#2e3a48"/><ellipse cx="21" cy="27" rx="9" ry="11" fill="#e4e2da"/><circle cx="21" cy="14" r="6" fill="#e8e6de"/><path d="M12 22h18v6h-18z" fill="#e2c030"/><path d="M33 10v28" stroke="#c8b890" stroke-width="1.3"/><circle cx="33" cy="10" r="1.5" fill="#d03030"/></g></svg>
<div class="a" style="left:0;top:76px;width:77px;height:18px;background:#0c0c0c"></div>
<svg style="left:1px;top:76px" width="18" height="18"><rect width="18" height="18" fill="#f5841f"/><circle cx="9" cy="6.5" r="3.2" fill="#fff"/><path d="M2.5 16a6.5 5.5 0 0 1 13 0z" fill="#fff"/></svg><svg style="left:25px;top:78px" width="12" height="14"><path d="M6 1.5a2.3 2.3 0 0 1 2.3 2.3v3.4a2.3 2.3 0 0 1-4.6 0v-3.4a2.3 2.3 0 0 1 2.3-2.3z" fill="#eee"/><path d="M2 6.5a4 4 0 0 0 8 0M6 10.5v2.5M3.5 13h5" stroke="#eee" fill="none" stroke-width="1.1"/><path d="M1 12.5L11 2.5" stroke="#e23b3b" stroke-width="1.3"/></svg>
<div class="t" style="left:42px;top:81px;font-size:11px;color:#e6e6e6">赵晓峰</div></div>
<div class="a" style="left:9px;top:376px;width:170px;height:97px;border:1px solid #46484c;border-radius:4px;background:linear-gradient(#232427,#1d1e20);overflow:hidden"><svg style="left:60px;top:18px" width="46" height="46"><defs><clipPath id="c4"><circle cx="23" cy="23" r="23"/></clipPath></defs><g clip-path="url(#c4)"><rect width="46" height="46" fill="#5b93c6"/><path d="M0 8h6v18h-6z" fill="#d8dcc0"/><path d="M2 14h4v8h-4z" fill="#7aa858"/><path d="M28 24q2-10 10-10q8 1 8 10v8h-16z" fill="#c48c74"/><path d="M27 16q4-9 13-7q7 3 6 12l-4 2q-2-6-8-5q-4 1-7-2z" fill="#3a2a22"/><path d="M18 46q4-10 14-12q10-2 14 4v8z" fill="#e6e2d4"/><path d="M12 46q3-6 8-8l3 8z" fill="#c48c74"/></g></svg>
<div class="a" style="left:0;top:76px;width:77px;height:18px;background:#0c0c0c"></div>
<svg style="left:1px;top:76px" width="18" height="18"><rect width="18" height="18" fill="#0a6cf5"/><circle cx="9" cy="6.5" r="3.2" fill="#fff"/><path d="M2.5 16a6.5 5.5 0 0 1 13 0z" fill="#fff"/></svg><svg style="left:25px;top:78px" width="12" height="14"><path d="M6 1.5a2.3 2.3 0 0 1 2.3 2.3v3.4a2.3 2.3 0 0 1-4.6 0v-3.4a2.3 2.3 0 0 1 2.3-2.3z" fill="#eee"/><path d="M2 6.5a4 4 0 0 0 8 0M6 10.5v2.5M3.5 13h5" stroke="#eee" fill="none" stroke-width="1.1"/><path d="M1 12.5L11 2.5" stroke="#e23b3b" stroke-width="1.3"/></svg>
<div class="t" style="left:42px;top:81px;font-size:11px;color:#e6e6e6">朱材峰</div></div>
<div class="a" style="left:9px;top:481px;width:170px;height:97px;border:1px solid #46484c;border-radius:4px;background:linear-gradient(#232427,#1d1e20);overflow:hidden"><div class="a" style="left:60px;top:17px;width:46px;height:46px;border-radius:50%;background:linear-gradient(#0a5fe0,#0a48b0)"></div>
<div class="t" style="left:78px;top:32px;font-size:16px;color:#c8d4ec">L</div>
<div class="a" style="left:0;top:76px;width:36px;height:19px;background:#101012"></div>
<div class="t" style="left:5px;top:82px;font-size:10px;color:#bdbdbd">LCCai</div></div>
<div class="a" style="left:12px;top:34px;width:174px;height:33px;background:#3d3f43"></div>
<div class="t" style="left:22px;top:46px;font-size:12px;letter-spacing:-0.25px;color:#f0f0f0">正在讲话: 余步文;</div>
<svg style="left:112px;top:39px" width="44" height="24"><defs><linearGradient id="dg" x1="0" x2="1" y1="0" y2="1"><stop offset="0" stop-color="#6a6c70"/><stop offset="1" stop-color="#45474b"/></linearGradient></defs><path d="M0 13l10-11l11 11l-11 11z" fill="url(#dg)"/><path d="M12 13l10-11l11 11l-11 11z" fill="url(#dg)"/><path d="M24 13l9-10l10 10l-10 10z" fill="url(#dg)"/></svg>
<div class="a" style="left:160px;top:40px;width:1px;height:22px;background:#6a6c70"></div>
<svg style="left:169px;top:45px" width="14" height="12"><path d="M6 0.5l-5.5 5l5.5 5v-3q5-0.5 7.5 3.5q-1-6.5-7.5-7z" fill="#bbb"/></svg>
<div class="a" style="left:180px;top:66px;width:6px;height:60px;background:linear-gradient(#2a3444,#1c2a38)"></div>
<div class="a" style="left:182px;top:84px;width:3px;height:36px;background:repeating-linear-gradient(180deg,rgba(0,0,0,.35) 0,rgba(0,0,0,.35) 1px,transparent 1px,transparent 2.5px),linear-gradient(#c8c850,#8cc860 60%,#4ab890)"></div>
</div>
</body></html>
